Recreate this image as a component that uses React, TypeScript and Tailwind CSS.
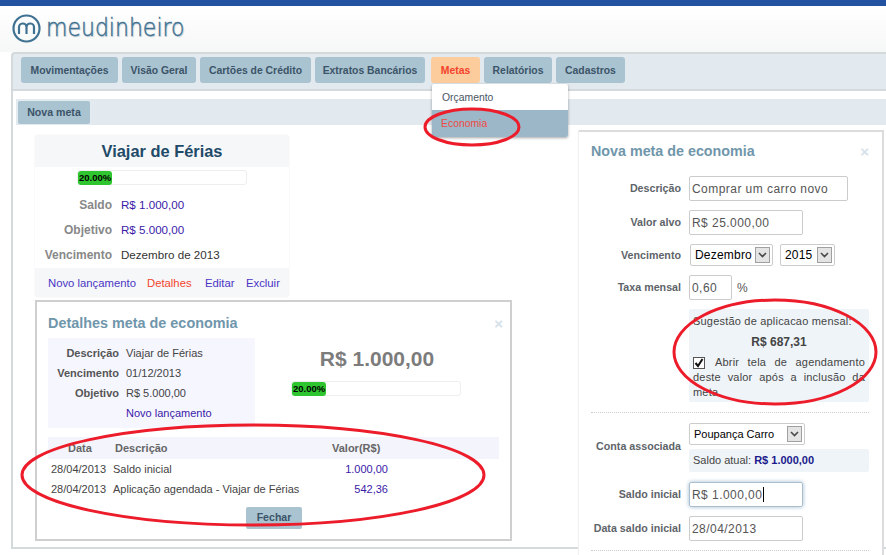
const menu = [
  { label: 'Movimentações', w: 'w-[97px]' },
  { label: 'Visão Geral', w: 'w-[74px]' },
  { label: 'Cartões de Crédito', w: 'w-[111px]' },
  { label: 'Extratos Bancários', w: 'w-[110px]' },
];
const menuRight = [
  { label: 'Relatórios', w: 'w-[68px]' },
  { label: 'Cadastros', w: 'w-[69px]' },
];

function Progress() {
  return (
    <div className="h-[15px] w-[170px] rounded-[3px] border border-[#eceef0] bg-white">
      <div className="flex h-[14px] w-[34px] items-center rounded-[3px] bg-[#2fc52f] pl-px text-[9.5px] font-bold text-black">
        20.00%
      </div>
    </div>
  );
}

function Arrow() {
  return (
    <span className="flex h-[16px] w-[15px] shrink-0 items-center justify-center border border-[#a0a0a0] bg-[#e4e4e4]">
      <svg width="9" height="6" viewBox="0 0 9 6">
        <path d="M1 1l3.5 3.5L8 1" fill="none" stroke="#4a4a4a" strokeWidth="1.6" />
      </svg>
    </span>
  );
}

function Input({ w, value, caret, focus }: { w: string; value: string; caret?: boolean; focus?: boolean }) {
  return (
    <div
      className={`flex h-[25px] ${w} items-center rounded-[2px] border pl-[2px] text-[12px] tracking-[0.45px] text-[#555] ${
        focus ? 'border-[#a9bfd0] shadow-[0_0_4px_#9db8cc]' : 'border-[#ccc]'
      }`}
    >
      {value}
      {caret && <span className="ml-px h-[15px] w-px bg-black" />}
    </div>
  );
}

function Select({ w, children }: { w: string; children: React.ReactNode }) {
  return (
    <div className={`flex h-[22px] ${w} items-center justify-between whitespace-nowrap rounded-[2px] border border-[#ccc] pl-[4px] pr-[2px] text-[12px] tracking-[0.2px] text-black`}>
      {children}
      <Arrow />
    </div>
  );
}

function Row({ label, className, children }: { label: string; className: string; children: React.ReactNode }) {
  return (
    <div className={`flex items-center ${className}`}>
      <span className="w-[90px] shrink-0 whitespace-nowrap text-right text-[10.7px] font-bold text-[#5e6469]">{label}</span>
      <div className="ml-[8px]">{children}</div>
    </div>
  );
}

export default function App() {
  return (
    <div className="relative h-[555px] w-[886px] overflow-hidden bg-white font-['Liberation_Sans',Arial,sans-serif]">
      <div className="h-[6px] bg-[#2353a0]" />

      {/* logo */}
      <header className="flex h-[46px] items-center bg-gradient-to-b from-white to-[#f6f7f7] pl-[12px]">
        <svg width="29" height="29" viewBox="0 0 29 29" className="mb-[1px]">
          <circle cx="14.5" cy="14.5" r="13" fill="none" stroke="#3f7292" strokeWidth="2.2" />
          <path d="M7 20v-6.5a3.600 3.600 0 0 1 7.500-.5v7m0-7a3.600 3.600 0 0 1 7.500.5V20" fill="none" stroke="#3f7292" strokeWidth="2.200" />
        </svg>
        <span className="mb-[3px] ml-[5px] inline-block scale-y-[1.15] font-['DejaVu_Sans',sans-serif] text-[22px] font-extralight leading-none text-[#3f7292] [-webkit-text-stroke:0.4px_#3f7292] [text-shadow:1px_1px_1px_#b8c5cc]">
          meudinheiro
        </span>
      </header>

      {/* main menu */}
      <nav className="ml-[11px] flex h-[39px] items-start gap-[4px] rounded-tl-[4px] border-y-2 border-l-2 border-[#d4d9dc] bg-[#e2e9ef] pl-[8px] pt-[3px]">
        {menu.map((m) => (
          <div key={m.label} className={`flex h-[26px] ${m.w} items-center justify-center rounded-[3px] bg-[#a9c3d1] pt-px text-[10.4px] font-bold text-[#3c5468]`}>
            {m.label}
          </div>
        ))}
        <div className="ml-[2px] flex h-[26px] w-[49px] items-center justify-center rounded-[3px] bg-[#fccc9c] pt-px text-[10.4px] font-bold text-[#f2432b]">
          Metas
        </div>
        {menuRight.map((m) => (
          <div key={m.label} className={`flex h-[26px] ${m.w} items-center justify-center rounded-[3px] bg-[#a9c3d1] pt-px text-[10.4px] font-bold text-[#3c5468]`}>
            {m.label}
          </div>
        ))}
      </nav>

      {/* page body */}
      <main className="ml-[11px] h-[458px] border-b-2 border-l-2 border-[#d4d9dc] pl-[3px] pt-[8px]">
        <div className="flex h-[26px] items-center bg-[#e2e9ef] pl-[2px]">
          <div className="flex h-[23px] w-[72px] items-center justify-center rounded-[2px] bg-[#a9c3d1] pt-px text-[10.6px] font-bold text-[#3c5468]">
            Nova meta
          </div>
        </div>

        {/* goal card */}
        <section className="ml-[19px] mt-[10px] h-[162px] w-[254px] overflow-hidden rounded-[4px] shadow-[0_0_1px_#ccc]">
          <h2 className="flex h-[32px] items-center justify-center bg-[#f5f7f9] text-[16.4px] font-bold text-[#1f4a68]">Viajar de Férias</h2>
          <div className="flex h-[20px] items-center pl-[42px] pt-[1px]">
            <Progress />
          </div>
          <div className="flex h-[81px] flex-col pt-[5px] text-[11.6px]">
            {[
              { k: 'Saldo', v: 'R$ 1.000,00', c: 'text-[#3a1aa8]' },
              { k: 'Objetivo', v: 'R$ 5.000,00', c: 'text-[#3a1aa8]' },
              { k: 'Vencimento', v: 'Dezembro de 2013', c: 'text-[#333]' },
            ].map((r) => (
              <div key={r.k} className="flex h-[25px] items-center">
                <span className="w-[77px] text-right text-[12px] font-bold text-[#888]">{r.k}</span>
                <span className={`ml-[9px] ${r.c}`}>{r.v}</span>
              </div>
            ))}
          </div>
          <div className="flex h-[29px] items-center whitespace-nowrap bg-[#f5f7f9] pl-[13px] pt-px text-[11.3px] text-[#4a35c4]">
            <span className="w-[87px]">Novo lançamento</span>
            <span className="ml-[12px] w-[45px] text-[#f4452f]">Detalhes</span>
            <span className="ml-[13px] w-[29px]">Editar</span>
            <span className="ml-[12px]">Excluir</span>
          </div>
        </section>

        {/* details window */}
        <section className="ml-[19px] mt-[3px] h-[241px] w-[477px] border-2 border-[#cfcfcf] pl-[11px] pr-[11px]">
          <div className="flex items-center justify-between pt-[11px]">
            <h3 className="text-[14.4px] font-bold leading-[20px] text-[#6f96ab]">Detalhes meta de economia</h3>
            <span className="mr-[-4px] text-[15px] font-bold leading-none text-[#d5e1ea]">×</span>
          </div>
          <div className="mt-[5px] flex h-[90px]">
            <div className="w-[207px] bg-[#f6f6ff] pt-[5px] text-[11px] text-[#444]">
              {[
                ['Descrição', 'Viajar de Férias'],
                ['Vencimento', '01/12/2013'],
                ['Objetivo', 'R$ 5.000,00'],
              ].map(([k, v]) => (
                <div key={k} className="flex h-[20px] items-center">
                  <span className="w-[71px] text-right font-bold text-[#555]">{k}</span>
                  <span className="ml-[7px]">{v}</span>
                </div>
              ))}
              <div className="flex h-[20px] items-center pl-[78px] text-[#3a1aa8]">Novo lançamento</div>
            </div>
            <div className="flex w-[244px] flex-col pl-[36px] pt-[8px]">
              <span className="w-[170px] pl-[2px] text-center text-[21px] font-bold leading-[26px] text-[#7c7c7c]">R$ 1.000,00</span>
              <div className="mt-[9px]">
                <Progress />
              </div>
            </div>
          </div>
          <div className="mt-[9px] flex h-[22px] items-center bg-[#f3f4fc] text-[11px] font-bold text-[#666]">
            <span className="ml-[20px] w-[47px]">Data</span>
            <span className="w-[217px]">Descrição</span>
            <span>Valor(R$)</span>
          </div>
          <div className="text-[11px] text-[#444]">
            <div className="flex h-[20px] items-center">
              <span className="ml-[3px] w-[62px]">28/04/2013</span>
              <span className="w-[220px]">Saldo inicial</span>
              <span className="w-[55px] text-right text-[#3a1aa8]">1.000,00</span>
            </div>
            <div className="flex h-[20px] items-center">
              <span className="ml-[3px] w-[62px]">28/04/2013</span>
              <span className="w-[220px] whitespace-nowrap">Aplicação agendada - Viajar de Férias</span>
              <span className="w-[55px] text-right text-[#3a1aa8]">542,36</span>
            </div>
          </div>
          <div className="ml-[198px] mt-[8px] flex h-[22px] w-[56px] items-center justify-center rounded-[2px] bg-[#a9c3d1] text-[10.6px] font-bold text-[#3c5468]">
            Fechar
          </div>
        </section>
      </main>

      {/* menu dropdown */}
      <div className="absolute left-[432px] top-[84px] w-[136px] overflow-hidden rounded-[2px] bg-white text-[10.4px] shadow-[0_1px_3px_rgba(0,0,0,0.35)]">
        <div className="flex h-[26px] items-center pl-[10px] pt-[2px] text-[#4a5563]">Orçamento</div>
        <div className="flex h-[27px] items-center bg-[#9cb7c8] pl-[9px] text-[#f04a45]">Economia</div>
      </div>

      {/* new goal window */}
      <section className="absolute left-[579px] top-[130px] h-[425px] w-[305px] border-r-2 border-t-2 border-[#dcdcdc] bg-white pl-[12px] pr-[13px] shadow-[-1px_0_1px_#f0f0f0]">
        <div className="flex items-center justify-between pt-[9px]">
          <h3 className="text-[14.3px] font-bold leading-[20px] text-[#6f96ab]">Nova meta de economia</h3>
          <span className="text-[15px] font-bold leading-none text-[#d5e1ea]">×</span>
        </div>
        <Row label="Descrição" className="mt-[15px]"><Input w="w-[159px]" value="Comprar um carro novo" /></Row>
        <Row label="Valor alvo" className="mt-[9px]"><Input w="w-[114px]" value="R$ 25.000,00" /></Row>
        <Row label="Vencimento" className="mt-[9px]">
          <div className="ml-px flex gap-[7px]">
            <Select w="w-[83px]">Dezembro</Select>
            <Select w="w-[55px]">2015</Select>
          </div>
        </Row>
        <Row label="Taxa mensal" className="mt-[9px]">
          <div className="flex items-center gap-[5px] text-[12px] text-[#555]">
            <Input w="w-[43px]" value="0,60" />%
          </div>
        </Row>
        <div className="ml-[98px] mt-[9px] h-[93px] w-[180px] rounded-[2px] bg-[#eff4f8] px-[4px] pt-[5px] text-[11px] tracking-[0.2px] text-[#444]">
          <div className="leading-[14px]">Sugestão de aplicacao mensal:</div>
          <div className="mt-[6px] text-center text-[12px] font-bold leading-[16px] tracking-normal">R$ 687,31</div>
          <p className="mt-[5px] text-justify leading-[15px]">
            <span className="mr-[10px] inline-flex h-[12px] w-[12px] translate-y-[2px] items-center justify-center border border-[#555] bg-white">
              <svg width="10" height="10" viewBox="0 0 10 10">
                <path d="M1.500 5l2.500 3 4.500-7" fill="none" stroke="#111" strokeWidth="2" />
              </svg>
            </span>
            Abrir tela de agendamento deste valor após a inclusão da meta.
          </p>
        </div>
        <div className="mt-[10px] border-t border-dotted border-[#ccc]" />
        <div className="mt-[10px] flex">
          <span className="mt-[15px] w-[90px] whitespace-nowrap text-right text-[10.7px] font-bold text-[#5e6469]">Conta associada</span>
          <div className="ml-[8px]">
            <Select w="w-[116px]"><span className="text-[11px] tracking-normal">Poupança Carro</span></Select>
            <div className="mt-[4px] flex h-[23px] w-[180px] items-center rounded-[2px] bg-[#eff4f8] pl-[4px] text-[11px] text-[#444]">
              Saldo atual:&nbsp;<b className="text-[#1a1a8c]">R$ 1.000,00</b>
            </div>
          </div>
        </div>
        <Row label="Saldo inicial" className="mt-[10px]"><Input w="w-[114px]" value="R$ 1.000,00" caret focus /></Row>
        <Row label="Data saldo inicial" className="mt-[9px]"><Input w="w-[114px]" value="28/04/2013" /></Row>
        <div className="mt-[9px] border-t border-dotted border-[#ccc]" />
      </section>

      {/* hand-drawn red marks */}
      <svg className="pointer-events-none absolute inset-0" width="886" height="555" viewBox="0 0 886 555">
        <g fill="none" stroke="#ec1c2a" strokeWidth="3">
          <ellipse cx="472" cy="127" rx="47" ry="18" />
          <ellipse cx="253" cy="475" rx="231" ry="50" />
          <ellipse cx="775" cy="352" rx="101" ry="52" />
        </g>
      </svg>
    </div>
  );
}
